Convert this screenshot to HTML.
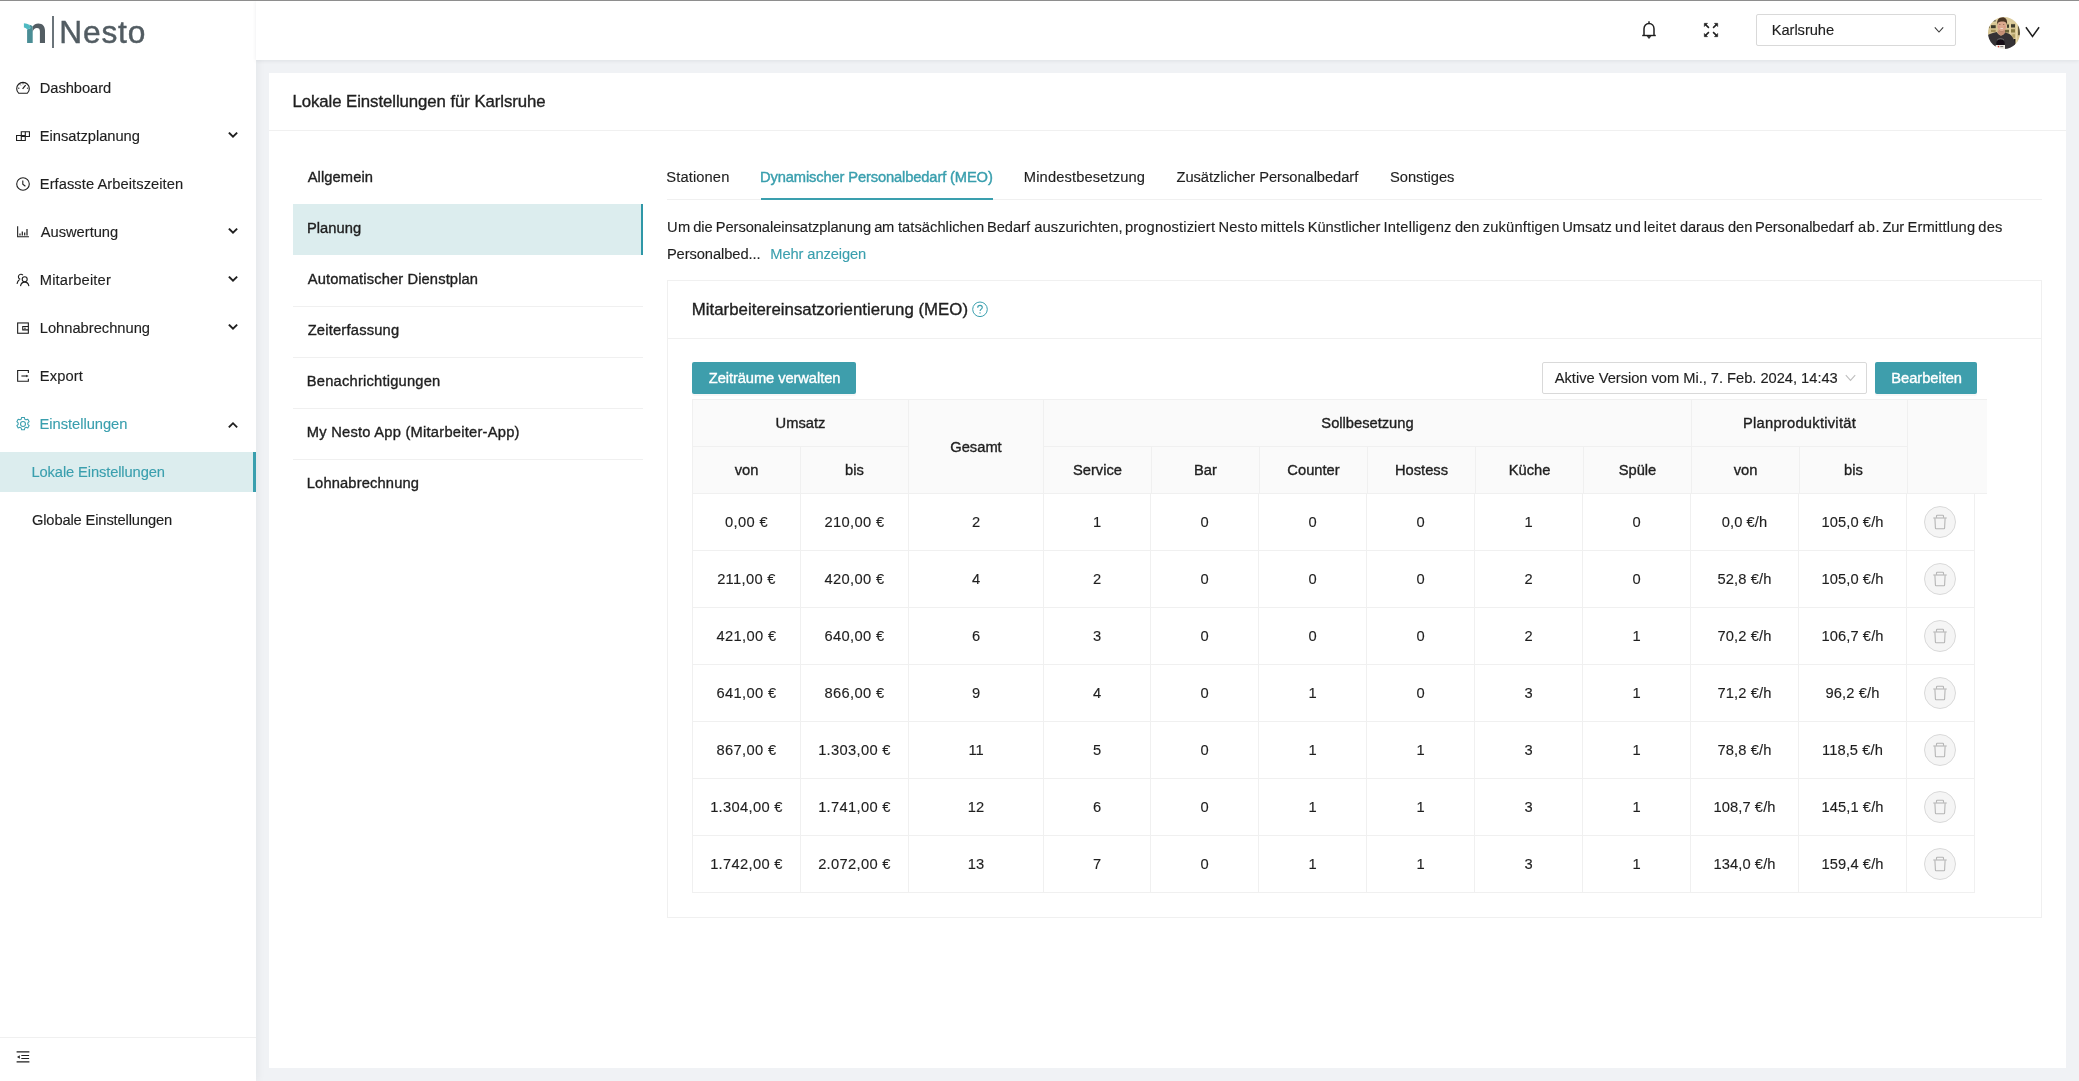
<!DOCTYPE html>
<html lang="de">
<head>
<meta charset="utf-8">
<title>Nesto</title>
<style>
*{box-sizing:border-box;}
html,body{margin:0;padding:0;}
body{width:2079px;height:1081px;overflow:hidden;background:#f0f2f5;font-family:"Liberation Sans",sans-serif;font-size:14px;color:#1f1f1f;position:relative;}
.abs{position:absolute;}
#topline{left:0;top:0;width:2079px;height:1px;background:#8e8e8e;z-index:50;}
#sidebar{will-change:transform;left:0;top:0;width:256px;height:1081px;background:#fff;box-shadow:2px 0 8px rgba(29,35,41,.05);z-index:10;}
#header{will-change:transform;left:256px;top:0;width:1823px;height:60px;background:#fff;box-shadow:0 1px 4px rgba(0,21,41,.08);z-index:11;}
#card{left:269px;top:73px;width:1797px;height:995px;background:#fff;}
.t{position:absolute;white-space:nowrap;line-height:20px;height:20px;font-size:14.7px;}
.c{position:absolute;white-space:nowrap;line-height:20px;height:20px;font-size:14.7px;text-align:center;}
.t,.c{-webkit-text-stroke:0.14px currentColor;}
.m{-webkit-text-stroke:0.36px currentColor;}
.mm{-webkit-text-stroke:0.42px currentColor;}
.ln{position:absolute;background:#f0f0f0;}
.ic{position:absolute;}
.sel{background:#dcedee;}
.teal{color:#3a9fae;}
.del{position:absolute;width:32px;height:32px;border-radius:50%;border:1px solid #d9d9d9;background:#f5f5f5;}
</style>
</head>
<body>
<div id="topline" class="abs"></div>
<div id="sidebar" class="abs">
<svg class="abs" style="left:0;top:0" width="160" height="60" viewBox="0 0 160 60">
<path d="M27.100 29.400 L30.300 28.200 C30.300 26.800 29.900 25.600 29.100 24.800 C31 25.100 32.200 25.800 32.700 26.600 L32.700 42.900 L27.100 42.900 Z" fill="#4a8d95"/>
<path d="M23.900 23.300 C26 23.500 28 24 29.100 24.800 C30 25.700 30.400 27 30.300 28.200 L27.100 29.400 C26.600 28.400 25.400 27.700 23.900 27.500 Z" fill="#4fbac2"/>
<path d="M32.700 26.600 C33.900 24.600 35.900 23.400 38.300 23.400 C42.600 23.400 45 26.200 45 30.600 L45 42.900 L39.900 42.900 L39.900 31.400 C39.900 29.200 38.900 28 36.900 28 C34.800 28 33.300 29.500 32.700 31.700 Z" fill="#535d63"/>
<rect x="52" y="16" width="2" height="32" fill="#6b747a"/>
</svg>
<div class="t" style="left:59.31px;top:9.500px;font-size:31.700px;line-height:44px;height:44px;color:#525c62;-webkit-text-stroke:0.45px #525c62;letter-spacing:0.819px;">Nesto</div>
<svg class="ic" style="left:16px;top:81px" width="14" height="14" viewBox="0 0 14 14" fill="none" stroke="#1f1f1f" stroke-width="1.1"><path d="M2.6 12.2 A6.3 6.3 0 1 1 11.4 12.2 Z" stroke-linejoin="round"/><path d="M6.6 7.8 L9.6 4.2" stroke-width="1.2"/><path d="M2 7.2h1.4M4 3.4l.8.9M7 2.2v1.1M10.9 7.2h1.3" stroke-width="1"/></svg><div class="t" style="left:39.78px;top:78.0px;letter-spacing:-0.053px;">Dashboard</div>
<svg class="ic" style="left:16px;top:129px" width="14" height="14" viewBox="0 0 14 14" fill="none" stroke="#1f1f1f" stroke-width="1.1"><path d="M.55 6.450H9.300V11.450H.550Z"/><path d="M5.300 2.750H13.450V7.550H5.300Z"/><path d="M5.300 7.550V11.450M9.300 2.750V6.450"/></svg><div class="t" style="left:39.78px;top:126.0px;letter-spacing:-0.025px;">Einsatzplanung</div>
<svg class="ic" style="left:227px;top:130px" width="12" height="10" viewBox="0 0 12 10" fill="none" stroke="#1f1f1f" stroke-width="1.85" stroke-linecap="square"><path d="M2.500 3.200l3.500 3.500 3.500-3.500"/></svg>
<svg class="ic" style="left:16px;top:177px" width="14" height="14" viewBox="0 0 14 14" fill="none" stroke="#1f1f1f" stroke-width="1.1"><circle cx="7" cy="7" r="6.3"/><path d="M6.8 3.4v3.9l2.6 1.9"/></svg><div class="t" style="left:39.77px;top:174.0px;letter-spacing:0.063px;">Erfasste Arbeitszeiten</div>
<svg class="ic" style="left:16px;top:225px" width="14" height="14" viewBox="0 0 14 14" fill="none" stroke="#1f1f1f" stroke-width="1.1"><path d="M1.650 1.200v10.600h11.300"/><path d="M4 10.400V8.600M6.300 10.400V6.600M8.700 10.400V7.400M11 10.400V4" stroke-width="1.200"/></svg><div class="t" style="left:40.79px;top:222.0px;letter-spacing:-0.018px;">Auswertung</div>
<svg class="ic" style="left:227px;top:226px" width="12" height="10" viewBox="0 0 12 10" fill="none" stroke="#1f1f1f" stroke-width="1.85" stroke-linecap="square"><path d="M2.500 3.200l3.500 3.500 3.500-3.500"/></svg>
<svg class="ic" style="left:16px;top:273px" width="14" height="14" viewBox="0 0 14 14" fill="none" stroke="#1f1f1f" stroke-width="1.1"><circle cx="8.700" cy="6.300" r="2.500"/><path d="M4.500 13.100c.4-2.500 2-4 4.200-4s3.800 1.500 4.200 4"/><path d="M6.900 2.200A2.550 2.550 0 1 0 4.300 6.300M3.500 6.500C2.200 7.500 1.300 9.100 1 10.900"/></svg><div class="t" style="left:39.78px;top:270.0px;letter-spacing:0.164px;">Mitarbeiter</div>
<svg class="ic" style="left:227px;top:274px" width="12" height="10" viewBox="0 0 12 10" fill="none" stroke="#1f1f1f" stroke-width="1.85" stroke-linecap="square"><path d="M2.500 3.200l3.500 3.500 3.500-3.500"/></svg>
<svg class="ic" style="left:16px;top:321px" width="14" height="14" viewBox="0 0 14 14" fill="none" stroke="#1f1f1f" stroke-width="1.1"><rect x="1.650" y="1.950" width="10.700" height="10.300"/><path d="M12.350 5.500H6.750v3.400H12.350"/><path d="M8.100 7.200h1.700" stroke-width="1"/></svg><div class="t" style="left:39.78px;top:318.0px;letter-spacing:-0.004px;">Lohnabrechnung</div>
<svg class="ic" style="left:227px;top:322px" width="12" height="10" viewBox="0 0 12 10" fill="none" stroke="#1f1f1f" stroke-width="1.85" stroke-linecap="square"><path d="M2.500 3.200l3.500 3.500 3.500-3.500"/></svg>
<svg class="ic" style="left:16px;top:369px" width="14" height="14" viewBox="0 0 14 14" fill="none" stroke="#1f1f1f" stroke-width="1.1"><path d="M12.350 3.900V1.450H1.650v10.800h10.700V9.700"/><path d="M5.400 7h5.600" stroke-width="1.100"/><path d="M10.300 5.700l2.300 1.300-2.300 1.300z" fill="#1f1f1f" stroke="none"/></svg><div class="t" style="left:39.78px;top:366.0px;letter-spacing:0.117px;">Export</div>
<svg class="ic" style="left:16px;top:417px" width="14" height="14" viewBox="0 0 14 14" fill="none" stroke="#3a9fae" stroke-width=".95"><g transform="translate(7 7) scale(1.120) translate(-7 -7)"><path d="M5.800 1.100h2.400l.4 1.600 1.100.6 1.600-.5 1.200 2.100-1.200 1.100v1.300l1.200 1.100-1.200 2.100-1.600-.5-1.100.6-.4 1.600H5.800l-.4-1.600-1.100-.6-1.600.5-1.200-2.100 1.200-1.100V6l-1.200-1.100 1.200-2.100 1.600.5 1.100-.6z" stroke-linejoin="round"/><circle cx="7" cy="7" r="2.200"/></g></svg><div class="t" style="left:39.54px;top:414.0px;color:#3a9fae;letter-spacing:-0.024px;">Einstellungen</div>
<svg class="ic" style="left:227px;top:419.7px" width="12" height="10" viewBox="0 0 12 10" fill="none" stroke="#1f1f1f" stroke-width="1.85" stroke-linecap="square"><path d="M2.500 6.700l3.500-3.500 3.500 3.500"/></svg>
<div class="abs sel" style="left:0;top:452px;width:256px;height:40px"></div><div class="abs" style="left:253px;top:452px;width:3px;height:40px;background:#3a9fae"></div>
<div class="t" style="left:31.49px;top:462.0px;color:#3a9fae;letter-spacing:-0.112px;">Lokale Einstellungen</div>
<div class="t" style="left:31.95px;top:510.0px;letter-spacing:-0.133px;">Globale Einstellungen</div>
<div class="ln" style="left:0;top:1037px;width:256px;height:1px"></div>
<svg class="abs" style="left:16px;top:1050px" width="14" height="14" viewBox="0 0 14 14" fill="none" stroke="#1f1f1f" stroke-width="1.1"><path d="M.6 1.900h12.800M5.300 5.500h7.800M5.300 8.500h7.800M.600 11.900h12.800"/><path d="M3.800 5.200v3.600L1 7z" fill="#1f1f1f" stroke="none"/></svg>
</div>
<div id="header" class="abs">
<svg class="abs" style="left:1385px;top:20px" width="16" height="20" viewBox="0 0 16 20" fill="none" stroke="#1f1f1f" stroke-width="1.5"><path d="M3 15.200V8.800C3 5.600 5.100 3.400 8 3.400s5 2.200 5 5.400v6.400" stroke-linejoin="round"/><path d="M1.200 15.500h13.600" stroke-width="1.400"/><path d="M8 1.300v1.900" stroke-width="1.400"/><path d="M6.100 16.200h3.800L8 18.600z" fill="#1f1f1f" stroke-width=".6"/></svg>
<svg class="abs" style="left:1447px;top:22px" width="16" height="16" viewBox="0 0 16 16" fill="#1f1f1f" stroke="#1f1f1f" stroke-width="1.500"><path d="M2.600 2.600L5.900 5.900M13.400 2.600L10.100 5.900M2.600 13.400L5.900 10.100M13.400 13.400L10.100 10.100" fill="none"/><path d="M1.300 1.300h3.300L1.300 4.600zM14.700 1.300v3.300L11.400 1.300zM1.300 14.700v-3.300L4.600 14.700zM14.700 14.700h-3.300L14.700 11.400z" stroke-width=".5"/></svg>
<div class="abs" style="left:1500px;top:14px;width:200px;height:32px;border:1px solid #d9d9d9;border-radius:2px;background:#fff"></div>
<div class="t" style="left:1515.72px;top:20.0px;font-size:14.7px;letter-spacing:-0.060px;">Karlsruhe</div>
<svg class="abs" style="left:1678px;top:26px" width="10" height="8" viewBox="0 0 10 8" fill="none" stroke="#3a3a3a" stroke-width="1.1"><path d="M.8 1.400L5 6l4.200-4.600"/></svg>
<svg class="abs" style="left:1732px;top:17px" width="32" height="32" viewBox="0 0 32 32">
<defs><clipPath id="av"><circle cx="16" cy="16" r="16"/></clipPath><filter id="bl" x="-10%" y="-10%" width="120%" height="120%"><feGaussianBlur stdDeviation="0.55"/></filter></defs>
<g clip-path="url(#av)"><g filter="url(#bl)">
<rect x="-2" y="-2" width="36" height="36" fill="#d6c592"/>
<rect x="-2" y="-2" width="36" height="8" fill="#dccc9c"/>
<rect x="5" y="2.800" width="2.700" height="1.700" fill="#6a6a5c"/>
<rect x="3" y="8.200" width="4.700" height="3" fill="#3d3b2b"/>
<rect x="0" y="8.600" width="2" height="2.600" fill="#8a7d50"/>
<rect x="3" y="12.800" width="4.700" height="2.200" fill="#a18e56"/>
<rect x="19" y="7.500" width="2" height="3.300" fill="#3a3a2c"/>
<rect x="23" y="7.200" width="4" height="3.300" fill="#403e2e"/>
<rect x="17" y="12.800" width="4" height="2.700" fill="#6c6339"/>
<rect x="23" y="12.200" width="4" height="3.300" fill="#867943"/>
<rect x="24.300" y="17.200" width="2.700" height="3.600" fill="#b3a266"/>
<rect x="30" y="8.200" width="2.500" height="10" fill="#5f573a"/>
<rect x="21.600" y="5" width="1" height="22" fill="#e9dbab"/>
<rect x="27.800" y="5" width="1.300" height="24" fill="#e9dbab"/>
<rect x="25.700" y="22" width="1.700" height="5" fill="#1d1c1b"/>
<path d="M-2 34V19C0 17.500 3 16.300 8.700 14.900C10 17 12 18.500 13 18.500S15.800 17.500 17 15.500C19.500 16 21.500 17 23 18.200C25 20.500 26.300 23 26.700 25L28 34z" fill="#343235"/>
<path d="M9.600 13.500h7.400v2c-1 2-2.500 3-4 3s-2.800-1.300-3.400-3.200z" fill="#c48f74"/>
<ellipse cx="13.800" cy="9.300" rx="4.500" ry="5.600" fill="#dba98e"/>
<path d="M9.200 8C8.600 3.300 10.800.3 14.200.3s5.500 2 4.800 7.900c-.5-2.300-1.300-3.600-4.800-3.600S9.800 5.500 9.200 8z" fill="#4a3424"/>
<path d="M10.200 11.800c.7 4 6.500 4 7.200 0-.5 1.700-1.800 2.400-3.600 2.400s-3.100-.7-3.600-2.400z" fill="#9a6a54"/>
<rect x="12.200" y="11.100" width="2.900" height=".8" rx=".4" fill="#ead8cd"/>
<ellipse cx="11.800" cy="7.400" rx=".8" ry=".45" fill="#6b4636"/><ellipse cx="15.700" cy="7.400" rx=".8" ry=".45" fill="#6b4636"/>
<ellipse cx="10.800" cy="10" rx="1" ry=".8" fill="#d79382"/><ellipse cx="16.700" cy="10" rx="1" ry=".8" fill="#d79382"/>
<path d="M8.300 28.200V26.500a4.200 4 0 0 1 8.400 0v1.700z" fill="#121112"/>
<path d="M9.200 23c1.600-1.800 5.200-1.800 6.800 0" fill="none" stroke="#939192" stroke-width=".6"/>
<rect x="7.700" y="28" width="9.300" height="4" fill="#efebe5"/>
<circle cx="10.500" cy="29.600" r=".8" fill="#d23b32"/>
<rect x="12.300" y="29.100" width="3" height="1" fill="#77736f"/>
</g></g></svg>
<svg class="abs" style="left:1769px;top:26px" width="15" height="12" viewBox="0 0 15 12" fill="none" stroke="#1f1f1f" stroke-width="1.5"><path d="M.9 1.200L7.500 10.400 14.100 1.200"/></svg>
</div>
<div id="card" class="abs"></div>
<div id="main" class="abs" style="will-change:transform;left:0;top:0;width:2079px;height:1081px;">
<div class="t m" style="left:292.47px;top:90.0px;font-size:16.8px;line-height:24px;height:24px;letter-spacing:-0.074px;">Lokale Einstellungen für Karlsruhe</div>
<div class="ln" style="left:269px;top:130px;width:1797px;height:1px"></div>
<div class="abs sel" style="left:293px;top:204px;width:350px;height:51px"></div><div class="abs" style="left:641px;top:204px;width:2px;height:51px;background:#2f97a7"></div>
<div class="t m" style="left:307.72px;top:166.6px;font-size:14.7px;letter-spacing:0.095px;">Allgemein</div>
<div class="t m" style="left:306.90px;top:217.6px;font-size:14.7px;letter-spacing:0.054px;">Planung</div>
<div class="t m" style="left:307.72px;top:268.6px;font-size:14.7px;letter-spacing:0.127px;">Automatischer Dienstplan</div>
<div class="t m" style="left:307.66px;top:319.6px;font-size:14.7px;letter-spacing:0.210px;">Zeiterfassung</div>
<div class="t m" style="left:306.81px;top:370.6px;font-size:14.7px;letter-spacing:0.214px;">Benachrichtigungen</div>
<div class="t m" style="left:306.76px;top:421.6px;font-size:14.7px;letter-spacing:0.242px;">My Nesto App (Mitarbeiter-App)</div>
<div class="t m" style="left:306.77px;top:472.6px;font-size:14.7px;letter-spacing:0.151px;">Lohnabrechnung</div>
<div class="ln" style="left:293px;top:306px;width:350px;height:1px"></div>
<div class="ln" style="left:293px;top:357px;width:350px;height:1px"></div>
<div class="ln" style="left:293px;top:408px;width:350px;height:1px"></div>
<div class="ln" style="left:293px;top:459px;width:350px;height:1px"></div>
<div class="t" style="left:666.26px;top:167.3px;font-size:14.7px;letter-spacing:0.126px;">Stationen</div>
<div class="t mm" style="left:759.99px;top:167.3px;color:#3a9fae;font-size:14.7px;letter-spacing:-0.126px;">Dynamischer Personalbedarf (MEO)</div>
<div class="t" style="left:1023.83px;top:167.3px;font-size:14.7px;letter-spacing:0.128px;">Mindestbesetzung</div>
<div class="t" style="left:1176.51px;top:167.3px;font-size:14.7px;letter-spacing:-0.041px;">Zusätzlicher Personalbedarf</div>
<div class="t" style="left:1390.01px;top:167.3px;font-size:14.7px;letter-spacing:-0.011px;">Sonstiges</div>
<div class="ln" style="left:667px;top:199px;width:1375px;height:1px"></div>
<div class="abs" style="left:761px;top:198px;width:232px;height:2px;background:#3a9fae"></div>
<div class="t" style="left:667.00px;top:217.3px;font-size:14.7px;letter-spacing:0.359px;">Um</div>
<div class="t" style="left:693.23px;top:217.3px;font-size:14.7px;letter-spacing:-0.036px;">die</div>
<div class="t" style="left:715.76px;top:217.3px;font-size:14.7px;letter-spacing:-0.070px;">Personaleinsatzplanung</div>
<div class="t" style="left:874.22px;top:217.3px;font-size:14.7px;letter-spacing:-0.428px;">am</div>
<div class="t" style="left:897.99px;top:217.3px;font-size:14.7px;letter-spacing:0.040px;">tatsächlichen</div>
<div class="t" style="left:986.95px;top:217.3px;font-size:14.7px;letter-spacing:-0.045px;">Bedarf</div>
<div class="t" style="left:1034.24px;top:217.3px;font-size:14.7px;letter-spacing:0.087px;">auszurichten,</div>
<div class="t" style="left:1124.92px;top:217.3px;font-size:14.7px;letter-spacing:0.145px;">prognostiziert</div>
<div class="t" style="left:1218.47px;top:217.3px;font-size:14.7px;letter-spacing:0.182px;">Nesto</div>
<div class="t" style="left:1260.59px;top:217.3px;font-size:14.7px;letter-spacing:0.274px;">mittels</div>
<div class="t" style="left:1307.64px;top:217.3px;font-size:14.7px;letter-spacing:0.008px;">Künstlicher</div>
<div class="t" style="left:1383.50px;top:217.3px;font-size:14.7px;letter-spacing:0.173px;">Intelligenz</div>
<div class="t" style="left:1454.88px;top:217.3px;font-size:14.7px;letter-spacing:-0.004px;">den</div>
<div class="t" style="left:1482.71px;top:217.3px;font-size:14.7px;letter-spacing:0.163px;">zukünftigen</div>
<div class="t" style="left:1562.17px;top:217.3px;font-size:14.7px;letter-spacing:-0.004px;">Umsatz</div>
<div class="t" style="left:1614.96px;top:217.3px;font-size:14.7px;letter-spacing:0.678px;">und</div>
<div class="t" style="left:1643.65px;top:217.3px;font-size:14.7px;letter-spacing:0.262px;">leitet</div>
<div class="t" style="left:1679.88px;top:217.3px;font-size:14.7px;letter-spacing:-0.069px;">daraus</div>
<div class="t" style="left:1727.92px;top:217.3px;font-size:14.7px;letter-spacing:-0.013px;">den</div>
<div class="t" style="left:1754.99px;top:217.3px;font-size:14.7px;letter-spacing:-0.073px;">Personalbedarf</div>
<div class="t" style="left:1858.01px;top:217.3px;font-size:14.7px;letter-spacing:0.588px;">ab.</div>
<div class="t" style="left:1882.49px;top:217.3px;font-size:14.7px;letter-spacing:-0.218px;">Zur</div>
<div class="t" style="left:1907.41px;top:217.3px;font-size:14.7px;letter-spacing:0.173px;">Ermittlung</div>
<div class="t" style="left:1978.23px;top:217.3px;font-size:14.7px;letter-spacing:0.284px;">des</div>
<div class="t" style="left:666.90px;top:244.3px;font-size:14.7px;letter-spacing:-0.079px;">Personalbed...</div>
<div class="t" style="left:770.26px;top:244.3px;color:#3a9fae;font-size:14.7px;letter-spacing:-0.095px;">Mehr anzeigen</div>
<div class="abs" style="left:667px;top:280px;width:1375px;height:638px;border:1px solid #f0f0f0;"></div>
<div class="ln" style="left:667px;top:338px;width:1375px;height:1px"></div>
<div class="t m" style="left:691.81px;top:298.0px;font-size:16.8px;line-height:24px;height:24px;letter-spacing:0.031px;">Mitarbeitereinsatzorientierung (MEO)</div>
<svg class="abs" style="left:972px;top:301px" width="16" height="17" viewBox="0 0 16 17" fill="none" stroke="#3a9fae" stroke-width="1"><circle cx="8" cy="8.300" r="7.300"/><path d="M5.700 6.700c0-1.400 1-2.300 2.300-2.300s2.300.9 2.300 2.100c0 1.500-2.200 1.700-2.200 3.400" stroke-width="1.100"/><circle cx="8.050" cy="11.900" r=".7" fill="#3a9fae" stroke="none"/></svg>
<div class="abs" style="left:692px;top:362px;width:164px;height:32px;background:#3e9eac;border-radius:2px;box-shadow:0 2px 0 rgba(0,0,0,.03)"></div>
<div class="t m" style="left:708.79px;top:368.0px;color:#fff;font-size:14.7px;letter-spacing:-0.080px;">Zeiträume verwalten</div>
<div class="abs" style="left:1542px;top:362px;width:325px;height:32px;border:1px solid #d9d9d9;border-radius:2px;background:#fff"></div>
<div class="t" style="left:1554.79px;top:368.0px;font-size:14.7px;letter-spacing:-0.027px;">Aktive Version vom Mi., 7. Feb. 2024, 14:43</div>
<svg class="abs" style="left:1845px;top:374px" width="11" height="8" viewBox="0 0 11 8" fill="none" stroke="#bfbfbf" stroke-width="1.1"><path d="M.8 1.200L5.500 6.400l4.700-5.200"/></svg>
<div class="abs" style="left:1875px;top:362px;width:102px;height:32px;background:#3e9eac;border-radius:2px;box-shadow:0 2px 0 rgba(0,0,0,.03)"></div>
<div class="t m" style="left:1891.36px;top:368.0px;color:#fff;font-size:14.7px;letter-spacing:-0.046px;">Bearbeiten</div>
<div class="abs" style="left:692px;top:399px;width:1295px;height:95px;background:#fafafa"></div>
<div class="ln" style="left:692px;top:399px;width:1295px;height:1px"></div>
<div class="ln" style="left:692px;top:493px;width:1295px;height:1px"></div>
<div class="ln" style="left:692px;top:446px;width:216px;height:1px"></div>
<div class="ln" style="left:1043px;top:446px;width:864px;height:1px"></div>
<div class="ln" style="left:692px;top:399px;width:1px;height:95px"></div>
<div class="ln" style="left:908px;top:399px;width:1px;height:95px"></div>
<div class="ln" style="left:1043px;top:399px;width:1px;height:95px"></div>
<div class="ln" style="left:1691px;top:399px;width:1px;height:95px"></div>
<div class="ln" style="left:1907px;top:399px;width:1px;height:95px"></div>
<div class="ln" style="left:800px;top:447px;width:1px;height:47px"></div>
<div class="ln" style="left:1151px;top:447px;width:1px;height:47px"></div>
<div class="ln" style="left:1259px;top:447px;width:1px;height:47px"></div>
<div class="ln" style="left:1367px;top:447px;width:1px;height:47px"></div>
<div class="ln" style="left:1475px;top:447px;width:1px;height:47px"></div>
<div class="ln" style="left:1583px;top:447px;width:1px;height:47px"></div>
<div class="ln" style="left:1799px;top:447px;width:1px;height:47px"></div>
<div class="c m" style="left:693px;width:215px;top:413px;font-size:14.7px;">Umsatz</div>
<div class="c m" style="left:1044px;width:647px;top:413px;font-size:14.7px;">Sollbesetzung</div>
<div class="c m" style="left:1692px;width:215px;top:413px;font-size:14.7px;letter-spacing:0.26px;">Planproduktivität</div>
<div class="c m" style="left:909px;width:134px;top:437px;font-size:14.7px;">Gesamt</div>
<div class="c m" style="left:693px;width:107px;top:460.3px;font-size:14.7px;">von</div>
<div class="c m" style="left:801px;width:107px;top:460.3px;font-size:14.7px;">bis</div>
<div class="c m" style="left:1044px;width:107px;top:460.3px;font-size:14.7px;">Service</div>
<div class="c m" style="left:1152px;width:107px;top:460.3px;font-size:14.7px;">Bar</div>
<div class="c m" style="left:1260px;width:107px;top:460.3px;font-size:14.7px;">Counter</div>
<div class="c m" style="left:1368px;width:107px;top:460.3px;font-size:14.7px;">Hostess</div>
<div class="c m" style="left:1476px;width:107px;top:460.3px;font-size:14.7px;">Küche</div>
<div class="c m" style="left:1584px;width:107px;top:460.3px;font-size:14.7px;">Spüle</div>
<div class="c m" style="left:1692px;width:107px;top:460.3px;font-size:14.7px;">von</div>
<div class="c m" style="left:1800px;width:107px;top:460.3px;font-size:14.7px;">bis</div>
<div class="ln" style="left:692px;top:494px;width:1px;height:399px"></div>
<div class="ln" style="left:800px;top:494px;width:1px;height:399px"></div>
<div class="ln" style="left:908px;top:494px;width:1px;height:399px"></div>
<div class="ln" style="left:1043px;top:494px;width:1px;height:399px"></div>
<div class="ln" style="left:1150px;top:494px;width:1px;height:399px"></div>
<div class="ln" style="left:1258px;top:494px;width:1px;height:399px"></div>
<div class="ln" style="left:1366px;top:494px;width:1px;height:399px"></div>
<div class="ln" style="left:1474px;top:494px;width:1px;height:399px"></div>
<div class="ln" style="left:1582px;top:494px;width:1px;height:399px"></div>
<div class="ln" style="left:1690px;top:494px;width:1px;height:399px"></div>
<div class="ln" style="left:1798px;top:494px;width:1px;height:399px"></div>
<div class="ln" style="left:1906px;top:494px;width:1px;height:399px"></div>
<div class="ln" style="left:1974px;top:494px;width:1px;height:399px"></div>
<div class="ln" style="left:692px;top:550px;width:1283px;height:1px"></div>
<div class="c" style="left:693px;width:107px;top:512.3px;font-size:14.7px;letter-spacing:0.33px;">0,00 €</div>
<div class="c" style="left:801px;width:107px;top:512.3px;font-size:14.7px;letter-spacing:0.33px;">210,00 €</div>
<div class="c" style="left:909px;width:134px;top:512.3px;font-size:14.7px;">2</div>
<div class="c" style="left:1044px;width:106px;top:512.3px;font-size:14.7px;">1</div>
<div class="c" style="left:1151px;width:107px;top:512.3px;font-size:14.7px;">0</div>
<div class="c" style="left:1259px;width:107px;top:512.3px;font-size:14.7px;">0</div>
<div class="c" style="left:1367px;width:107px;top:512.3px;font-size:14.7px;">0</div>
<div class="c" style="left:1475px;width:107px;top:512.3px;font-size:14.7px;">1</div>
<div class="c" style="left:1583px;width:107px;top:512.3px;font-size:14.7px;">0</div>
<div class="c" style="left:1691px;width:107px;top:512.3px;font-size:14.7px;letter-spacing:0.1px;">0,0 €/h</div>
<div class="c" style="left:1799px;width:107px;top:512.3px;font-size:14.7px;letter-spacing:0.1px;">105,0 €/h</div>
<div class="del" style="left:1924px;top:506px"><svg class="abs" style="left:7.100px;top:6.700px" width="16" height="16" viewBox="0 0 16 16" fill="none" stroke="#b5b5b5" stroke-width="1.1"><path d="M1.300 4h13.400"/><path d="M4.500 3.800V2.100c0-.5.300-.8.800-.8h5.400c.5 0 .8.300.8.800v1.700"/><path d="M2.900 4.200l.5 9.800c0 .4.300.7.700.7h7.800c.4 0 .7-.3.700-.7l.5-9.800"/></svg></div>
<div class="ln" style="left:692px;top:607px;width:1283px;height:1px"></div>
<div class="c" style="left:693px;width:107px;top:569.3px;font-size:14.7px;letter-spacing:0.33px;">211,00 €</div>
<div class="c" style="left:801px;width:107px;top:569.3px;font-size:14.7px;letter-spacing:0.33px;">420,00 €</div>
<div class="c" style="left:909px;width:134px;top:569.3px;font-size:14.7px;">4</div>
<div class="c" style="left:1044px;width:106px;top:569.3px;font-size:14.7px;">2</div>
<div class="c" style="left:1151px;width:107px;top:569.3px;font-size:14.7px;">0</div>
<div class="c" style="left:1259px;width:107px;top:569.3px;font-size:14.7px;">0</div>
<div class="c" style="left:1367px;width:107px;top:569.3px;font-size:14.7px;">0</div>
<div class="c" style="left:1475px;width:107px;top:569.3px;font-size:14.7px;">2</div>
<div class="c" style="left:1583px;width:107px;top:569.3px;font-size:14.7px;">0</div>
<div class="c" style="left:1691px;width:107px;top:569.3px;font-size:14.7px;letter-spacing:0.1px;">52,8 €/h</div>
<div class="c" style="left:1799px;width:107px;top:569.3px;font-size:14.7px;letter-spacing:0.1px;">105,0 €/h</div>
<div class="del" style="left:1924px;top:563px"><svg class="abs" style="left:7.100px;top:6.700px" width="16" height="16" viewBox="0 0 16 16" fill="none" stroke="#b5b5b5" stroke-width="1.1"><path d="M1.300 4h13.400"/><path d="M4.500 3.800V2.100c0-.5.300-.8.800-.8h5.400c.5 0 .8.300.8.800v1.700"/><path d="M2.900 4.200l.5 9.800c0 .4.300.7.700.7h7.800c.4 0 .7-.3.700-.7l.5-9.800"/></svg></div>
<div class="ln" style="left:692px;top:664px;width:1283px;height:1px"></div>
<div class="c" style="left:693px;width:107px;top:626.3px;font-size:14.7px;letter-spacing:0.33px;">421,00 €</div>
<div class="c" style="left:801px;width:107px;top:626.3px;font-size:14.7px;letter-spacing:0.33px;">640,00 €</div>
<div class="c" style="left:909px;width:134px;top:626.3px;font-size:14.7px;">6</div>
<div class="c" style="left:1044px;width:106px;top:626.3px;font-size:14.7px;">3</div>
<div class="c" style="left:1151px;width:107px;top:626.3px;font-size:14.7px;">0</div>
<div class="c" style="left:1259px;width:107px;top:626.3px;font-size:14.7px;">0</div>
<div class="c" style="left:1367px;width:107px;top:626.3px;font-size:14.7px;">0</div>
<div class="c" style="left:1475px;width:107px;top:626.3px;font-size:14.7px;">2</div>
<div class="c" style="left:1583px;width:107px;top:626.3px;font-size:14.7px;">1</div>
<div class="c" style="left:1691px;width:107px;top:626.3px;font-size:14.7px;letter-spacing:0.1px;">70,2 €/h</div>
<div class="c" style="left:1799px;width:107px;top:626.3px;font-size:14.7px;letter-spacing:0.1px;">106,7 €/h</div>
<div class="del" style="left:1924px;top:620px"><svg class="abs" style="left:7.100px;top:6.700px" width="16" height="16" viewBox="0 0 16 16" fill="none" stroke="#b5b5b5" stroke-width="1.1"><path d="M1.300 4h13.400"/><path d="M4.500 3.800V2.100c0-.5.300-.8.800-.8h5.400c.5 0 .8.300.8.800v1.700"/><path d="M2.900 4.200l.5 9.800c0 .4.300.7.700.7h7.800c.4 0 .7-.3.700-.7l.5-9.800"/></svg></div>
<div class="ln" style="left:692px;top:721px;width:1283px;height:1px"></div>
<div class="c" style="left:693px;width:107px;top:683.3px;font-size:14.7px;letter-spacing:0.33px;">641,00 €</div>
<div class="c" style="left:801px;width:107px;top:683.3px;font-size:14.7px;letter-spacing:0.33px;">866,00 €</div>
<div class="c" style="left:909px;width:134px;top:683.3px;font-size:14.7px;">9</div>
<div class="c" style="left:1044px;width:106px;top:683.3px;font-size:14.7px;">4</div>
<div class="c" style="left:1151px;width:107px;top:683.3px;font-size:14.7px;">0</div>
<div class="c" style="left:1259px;width:107px;top:683.3px;font-size:14.7px;">1</div>
<div class="c" style="left:1367px;width:107px;top:683.3px;font-size:14.7px;">0</div>
<div class="c" style="left:1475px;width:107px;top:683.3px;font-size:14.7px;">3</div>
<div class="c" style="left:1583px;width:107px;top:683.3px;font-size:14.7px;">1</div>
<div class="c" style="left:1691px;width:107px;top:683.3px;font-size:14.7px;letter-spacing:0.1px;">71,2 €/h</div>
<div class="c" style="left:1799px;width:107px;top:683.3px;font-size:14.7px;letter-spacing:0.1px;">96,2 €/h</div>
<div class="del" style="left:1924px;top:677px"><svg class="abs" style="left:7.100px;top:6.700px" width="16" height="16" viewBox="0 0 16 16" fill="none" stroke="#b5b5b5" stroke-width="1.1"><path d="M1.300 4h13.400"/><path d="M4.500 3.800V2.100c0-.5.300-.8.800-.8h5.400c.5 0 .8.300.8.800v1.700"/><path d="M2.900 4.200l.5 9.800c0 .4.300.7.700.7h7.800c.4 0 .7-.3.700-.7l.5-9.800"/></svg></div>
<div class="ln" style="left:692px;top:778px;width:1283px;height:1px"></div>
<div class="c" style="left:693px;width:107px;top:740.3px;font-size:14.7px;letter-spacing:0.33px;">867,00 €</div>
<div class="c" style="left:801px;width:107px;top:740.3px;font-size:14.7px;letter-spacing:0.33px;">1.303,00 €</div>
<div class="c" style="left:909px;width:134px;top:740.3px;font-size:14.7px;">11</div>
<div class="c" style="left:1044px;width:106px;top:740.3px;font-size:14.7px;">5</div>
<div class="c" style="left:1151px;width:107px;top:740.3px;font-size:14.7px;">0</div>
<div class="c" style="left:1259px;width:107px;top:740.3px;font-size:14.7px;">1</div>
<div class="c" style="left:1367px;width:107px;top:740.3px;font-size:14.7px;">1</div>
<div class="c" style="left:1475px;width:107px;top:740.3px;font-size:14.7px;">3</div>
<div class="c" style="left:1583px;width:107px;top:740.3px;font-size:14.7px;">1</div>
<div class="c" style="left:1691px;width:107px;top:740.3px;font-size:14.7px;letter-spacing:0.1px;">78,8 €/h</div>
<div class="c" style="left:1799px;width:107px;top:740.3px;font-size:14.7px;letter-spacing:0.1px;">118,5 €/h</div>
<div class="del" style="left:1924px;top:734px"><svg class="abs" style="left:7.100px;top:6.700px" width="16" height="16" viewBox="0 0 16 16" fill="none" stroke="#b5b5b5" stroke-width="1.1"><path d="M1.300 4h13.400"/><path d="M4.500 3.800V2.100c0-.5.300-.8.800-.8h5.400c.5 0 .8.300.8.800v1.700"/><path d="M2.900 4.200l.5 9.800c0 .4.300.7.700.7h7.800c.4 0 .7-.3.700-.7l.5-9.800"/></svg></div>
<div class="ln" style="left:692px;top:835px;width:1283px;height:1px"></div>
<div class="c" style="left:693px;width:107px;top:797.3px;font-size:14.7px;letter-spacing:0.33px;">1.304,00 €</div>
<div class="c" style="left:801px;width:107px;top:797.3px;font-size:14.7px;letter-spacing:0.33px;">1.741,00 €</div>
<div class="c" style="left:909px;width:134px;top:797.3px;font-size:14.7px;">12</div>
<div class="c" style="left:1044px;width:106px;top:797.3px;font-size:14.7px;">6</div>
<div class="c" style="left:1151px;width:107px;top:797.3px;font-size:14.7px;">0</div>
<div class="c" style="left:1259px;width:107px;top:797.3px;font-size:14.7px;">1</div>
<div class="c" style="left:1367px;width:107px;top:797.3px;font-size:14.7px;">1</div>
<div class="c" style="left:1475px;width:107px;top:797.3px;font-size:14.7px;">3</div>
<div class="c" style="left:1583px;width:107px;top:797.3px;font-size:14.7px;">1</div>
<div class="c" style="left:1691px;width:107px;top:797.3px;font-size:14.7px;letter-spacing:0.1px;">108,7 €/h</div>
<div class="c" style="left:1799px;width:107px;top:797.3px;font-size:14.7px;letter-spacing:0.1px;">145,1 €/h</div>
<div class="del" style="left:1924px;top:791px"><svg class="abs" style="left:7.100px;top:6.700px" width="16" height="16" viewBox="0 0 16 16" fill="none" stroke="#b5b5b5" stroke-width="1.1"><path d="M1.300 4h13.400"/><path d="M4.500 3.800V2.100c0-.5.300-.8.800-.8h5.400c.5 0 .8.300.8.800v1.700"/><path d="M2.900 4.200l.5 9.800c0 .4.300.7.700.7h7.800c.4 0 .7-.3.700-.7l.5-9.800"/></svg></div>
<div class="ln" style="left:692px;top:892px;width:1283px;height:1px"></div>
<div class="c" style="left:693px;width:107px;top:854.3px;font-size:14.7px;letter-spacing:0.33px;">1.742,00 €</div>
<div class="c" style="left:801px;width:107px;top:854.3px;font-size:14.7px;letter-spacing:0.33px;">2.072,00 €</div>
<div class="c" style="left:909px;width:134px;top:854.3px;font-size:14.7px;">13</div>
<div class="c" style="left:1044px;width:106px;top:854.3px;font-size:14.7px;">7</div>
<div class="c" style="left:1151px;width:107px;top:854.3px;font-size:14.7px;">0</div>
<div class="c" style="left:1259px;width:107px;top:854.3px;font-size:14.7px;">1</div>
<div class="c" style="left:1367px;width:107px;top:854.3px;font-size:14.7px;">1</div>
<div class="c" style="left:1475px;width:107px;top:854.3px;font-size:14.7px;">3</div>
<div class="c" style="left:1583px;width:107px;top:854.3px;font-size:14.7px;">1</div>
<div class="c" style="left:1691px;width:107px;top:854.3px;font-size:14.7px;letter-spacing:0.1px;">134,0 €/h</div>
<div class="c" style="left:1799px;width:107px;top:854.3px;font-size:14.7px;letter-spacing:0.1px;">159,4 €/h</div>
<div class="del" style="left:1924px;top:848px"><svg class="abs" style="left:7.100px;top:6.700px" width="16" height="16" viewBox="0 0 16 16" fill="none" stroke="#b5b5b5" stroke-width="1.1"><path d="M1.300 4h13.400"/><path d="M4.500 3.800V2.100c0-.5.300-.8.800-.8h5.400c.5 0 .8.300.8.800v1.700"/><path d="M2.900 4.200l.5 9.800c0 .4.300.7.700.7h7.800c.4 0 .7-.3.700-.7l.5-9.800"/></svg></div>
</div>
</body>
</html>
